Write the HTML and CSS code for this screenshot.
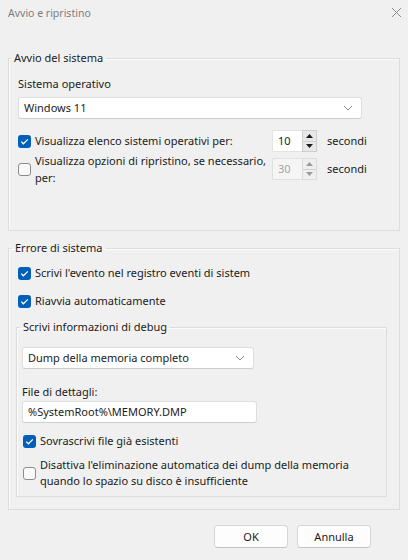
FILE: index.html
```html
<!DOCTYPE html>
<html>
<head>
  <title>Avvio e ripristino</title>
  <link rel="stylesheet" href="styles.css">
</head>
<body>
  <div class="dialog">
    <div class="titlebar">
      <span class="title">Avvio e ripristino</span>
      <svg class="close" width="11" height="11" viewBox="0 0 11 11"><path d="M1 1L10 10M10 1L1 10"/></svg>
    </div>

    <div class="content">
      <fieldset class="group group-startup">
        <legend>Avvio del sistema</legend>
        <div class="field-label">Sistema operativo</div>
        <div class="combo combo-os">
          <span>Windows 11</span>
          <svg class="chevron" width="10" height="6" viewBox="0 0 10 6"><path d="M1 1l4 4 4-4"/></svg>
        </div>

        <div class="timer-row timer-first">
          <div class="check">
            <span class="box checked"><svg width="13" height="13" viewBox="0 0 13 13"><path d="M3.2 6.6l2.2 2.2L9.8 4.4"/></svg></span>
            <span class="check-text">Visualizza elenco sistemi operativi per:</span>
          </div>
          <div class="spin">
            <span class="spin-value">10</span>
            <span class="spin-buttons">
              <span class="spin-btn"><svg width="7" height="4" viewBox="0 0 7 4"><path d="M0 4L3.5 0L7 4Z"/></svg></span>
              <span class="spin-btn"><svg width="7" height="4" viewBox="0 0 7 4"><path d="M0 0L3.5 4L7 0Z"/></svg></span>
            </span>
          </div>
          <span class="unit">secondi</span>
        </div>

        <div class="timer-row timer-second">
          <div class="check">
            <span class="box"></span>
            <span class="check-text">Visualizza opzioni di ripristino, se necessario,<br>per:</span>
          </div>
          <div class="spin disabled">
            <span class="spin-value">30</span>
            <span class="spin-buttons">
              <span class="spin-btn"><svg width="7" height="4" viewBox="0 0 7 4"><path d="M0 4L3.5 0L7 4Z"/></svg></span>
              <span class="spin-btn"><svg width="7" height="4" viewBox="0 0 7 4"><path d="M0 0L3.5 4L7 0Z"/></svg></span>
            </span>
          </div>
          <span class="unit">secondi</span>
        </div>
      </fieldset>

      <fieldset class="group group-error">
        <legend>Errore di sistema</legend>
        <div class="check check-line">
          <span class="box checked"><svg width="13" height="13" viewBox="0 0 13 13"><path d="M3.2 6.6l2.2 2.2L9.8 4.4"/></svg></span>
          <span class="check-text">Scrivi l'evento nel registro eventi di sistem</span>
        </div>
        <div class="check check-line second-line">
          <span class="box checked"><svg width="13" height="13" viewBox="0 0 13 13"><path d="M3.2 6.6l2.2 2.2L9.8 4.4"/></svg></span>
          <span class="check-text">Riavvia automaticamente</span>
        </div>

        <fieldset class="group group-debug">
          <legend>Scrivi informazioni di debug</legend>
          <div class="combo combo-dump">
            <span>Dump della memoria completo</span>
            <svg class="chevron" width="10" height="6" viewBox="0 0 10 6"><path d="M1 1l4 4 4-4"/></svg>
          </div>
          <div class="field-label label-file">File di dettagli:</div>
          <div class="textbox">%SystemRoot%\MEMORY.DMP</div>
          <div class="check check-line overwrite">
            <span class="box checked"><svg width="13" height="13" viewBox="0 0 13 13"><path d="M3.2 6.6l2.2 2.2L9.8 4.4"/></svg></span>
            <span class="check-text">Sovrascrivi file già esistenti</span>
          </div>
          <div class="check check-line multi">
            <span class="box"></span>
            <span class="check-text">Disattiva l'eliminazione automatica dei dump della memoria<br>quando lo spazio su disco è insufficiente</span>
          </div>
        </fieldset>
      </fieldset>
    </div>

    <div class="buttons">
      <button class="btn">OK</button>
      <button class="btn">Annulla</button>
    </div>
  </div>
</body>
</html>
```

FILE: styles.css
```css
* {
  box-sizing: border-box;
}

html, body {
  margin: 0;
  padding: 0;
  background: #f0f0f0;
}

body {
  font-family: "Segoe UI", "Noto Sans", sans-serif;
  font-size: 11px;
  line-height: 16px;
  color: #1b1b1b;
  width: 408px;
  height: 560px;
  overflow: hidden;
}

.titlebar {
  height: 24px;
  display: flex;
  align-items: center;
  justify-content: space-between;
  padding: 1px 6px 0 8px;
}

.title {
  color: #7d7d7d;
  font-size: 10.5px;
}

.close {
  fill: none;
  stroke: #8a8a8a;
  stroke-width: 1;
}

.content {
  padding: 26px 8px 0 8px;
}

/* Group boxes */
.group {
  margin: 0;
  border: 1px solid #dcdcdc;
  box-shadow: inset 1px 1px 0 #fbfbfb;
  min-width: 0;
}

.group legend {
  padding: 0 3px;
  line-height: 16px;
  color: #1b1b1b;
}

.group-startup {
  height: 181px;
  padding: 10px 9px 0 9px;
}

.group-startup legend {
  margin-left: -7px;
}

.group-error {
  margin-top: 9px;
  height: 270px;
  padding: 9px 12px 0 7px;
}

.group-error legend {
  margin-left: -4px;
}

.group-debug {
  margin-top: 10px;
  height: 178px;
  padding: 12px 5px 0 5px;
}

.group-debug legend {
  margin-left: -2px;
}

.field-label {
  height: 16px;
}

/* Combo and text boxes */
.combo, .textbox {
  height: 22px;
  background: #fff;
  border: 1px solid #dedede;
  border-bottom-color: #cdcdcd;
  border-radius: 3px;
  display: flex;
  align-items: center;
  padding: 0 8px 0 5px;
}

.combo {
  justify-content: space-between;
}

.combo-os {
  margin-top: 5px;
  width: 344px;
}

.combo-dump {
  width: 232px;
}

.chevron {
  fill: none;
  stroke: #8a8a8a;
  stroke-width: 1;
}

.label-file {
  margin-top: 15px;
}

.textbox {
  margin-top: 1px;
  width: 235px;
}

/* Checkboxes */
.check {
  display: flex;
  align-items: center;
  gap: 4px;
}

.box {
  flex: none;
  width: 13px;
  height: 13px;
  border-radius: 3px;
  border: 1px solid #8c8c8c;
  background: #f9f9f9;
  display: flex;
  align-items: center;
  justify-content: center;
}

.box.checked {
  border: none;
  background: #005fb8;
}

.box svg {
  fill: none;
  stroke: #fff;
  stroke-width: 1.3;
}

.check-line {
  margin-left: 2px;
}

.second-line {
  margin-top: 12px;
}

.overwrite {
  margin-top: 10px;
  margin-left: 1px;
}

.multi {
  margin-top: 8px;
  margin-left: 1px;
}

/* Timer rows */
.timer-row {
  display: grid;
  grid-template-columns: 254px 45px auto;
  grid-template-rows: 22px;
  align-items: center;
}

.timer-first {
  margin-top: 11px;
}

.timer-second {
  margin-top: 6px;
}

.timer-second .check-text {
  line-height: 17px;
}

.unit {
  margin-left: 10px;
}

.spin {
  display: flex;
  height: 22px;
  width: 45px;
}

.spin-value {
  flex: 1;
  background: #fff;
  border: 1px solid #e3e3e3;
  border-right: none;
  border-radius: 2px 0 0 2px;
  display: flex;
  align-items: center;
  padding-left: 5px;
}

.spin-buttons {
  width: 15px;
  display: flex;
  flex-direction: column;
  border: 1px solid #cfcfcf;
  background: #e8e8e8;
}

.spin-btn {
  flex: 1;
  display: flex;
  align-items: center;
  justify-content: center;
}

.spin-btn + .spin-btn {
  border-top: 1px solid #cfcfcf;
}

.spin-btn svg {
  fill: #1b1b1b;
}

.spin.disabled .spin-value {
  background: #f5f5f5;
  color: #a3a3a3;
  border-color: #e0e0e0;
}

.spin.disabled .spin-buttons {
  background: #efefef;
  border-color: #dcdcdc;
}

.spin.disabled .spin-btn svg {
  fill: #9a9a9a;
}

/* Bottom buttons */
.buttons {
  display: flex;
  justify-content: flex-end;
  gap: 9px;
  padding: 15px 37px 0 0;
}

.btn {
  width: 74px;
  height: 23px;
  font-family: inherit;
  font-size: 11px;
  color: #1b1b1b;
  background: #fdfdfd;
  border: 1px solid #d6d6d6;
  border-bottom-color: #c4c4c4;
  border-radius: 4px;
  padding: 0;
}
```
